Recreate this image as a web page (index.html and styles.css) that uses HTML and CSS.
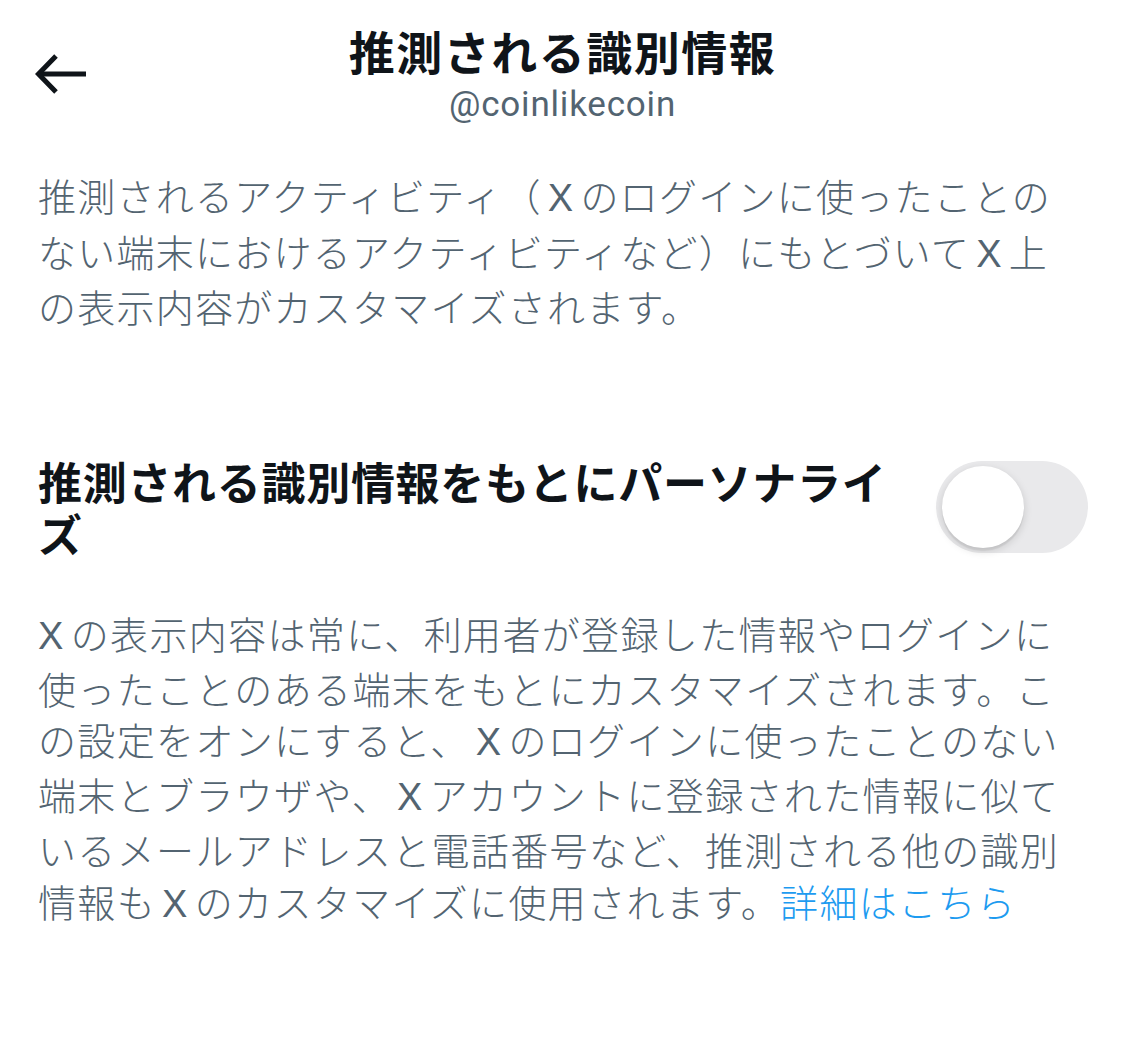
FILE: index.html
```html
<!DOCTYPE html>
<html lang="ja">
<head>
<meta charset="utf-8">
<link rel="stylesheet" href="styles.css">
</head>
<body>
<div class="page">
  <header class="header">
    <div class="back">
      <svg class="back-icon" viewBox="0 0 54 42" width="54" height="42">
        <path d="M52 21 H5" fill="none" stroke="#0f1419" stroke-width="5"/>
        <path d="M22 3 L4.5 21 L22 39" fill="none" stroke="#0f1419" stroke-width="5"/>
      </svg>
    </div>
    <div class="titles">
      <h1 class="title">推測される識別情報</h1>
      <div class="handle">@coinlikecoin</div>
    </div>
    <div class="spacer"></div>
  </header>

  <p class="desc">
    <span class="ln">推測されるアクティビティ（<span class="x">X</span>のログインに使ったことの</span>
    <span class="ln">ない端末におけるアクティビティなど）にもとづいて<span class="x">X</span>上</span>
    <span class="ln">の表示内容がカスタマイズされます。</span>
  </p>

  <div class="setting">
    <h2 class="setting-title">
      <span class="ln">推測される識別情報をもとにパーソナライ</span>
      <span class="ln">ズ</span>
    </h2>
    <div class="toggle"><div class="knob"></div></div>
  </div>

  <p class="desc desc2">
    <span class="ln"><span class="x x0">X</span>の表示内容は常に、利用者が登録した情報やログインに</span>
    <span class="ln">使ったことのある端末をもとにカスタマイズされます。こ</span>
    <span class="ln">の設定をオンにすると、<span class="x">X</span>のログインに使ったことのない</span>
    <span class="ln">端末とブラウザや、<span class="x">X</span>アカウントに登録された情報に似て</span>
    <span class="ln">いるメールアドレスと電話番号など、推測される他の識別</span>
    <span class="ln">情報も<span class="x">X</span>のカスタマイズに使用されます。<a class="link" href="#">詳細はこちら</a></span>
  </p>
</div>
</body>
</html>
```

FILE: styles.css
```css
html, body {
  margin: 0;
  padding: 0;
  background: #ffffff;
}
body {
  font-family: "Noto Sans CJK JP", "Noto Sans", sans-serif;
  color: #0f1419;
}
.page {
  width: 1125px;
  height: 1037px;
  overflow: hidden;
}
.header {
  display: grid;
  grid-template-columns: 1fr auto 1fr;
  align-items: center;
  padding-top: 22px;
}
.back {
  padding-left: 34px;
  display: flex;
  align-items: center;
}
.back-icon {
  display: block;
}
.titles {
  display: flex;
  flex-direction: column;
  align-items: center;
}
.title {
  margin: 0;
  font-size: 46px;
  line-height: 56px;
  font-weight: 700;
  letter-spacing: 1.5px;
  color: #0f1419;
}
.handle {
  margin-top: 6px;
  font-family: Roboto, "Liberation Sans", sans-serif;
  font-size: 35px;
  line-height: 42px;
  letter-spacing: 0.8px;
  color: #536471;
}
.desc {
  margin: 43px 0 0 0;
  padding: 0 38px;
  font-size: 38px;
  line-height: 52.5px;
  letter-spacing: 1.25px;
  font-weight: 300;
  color: #536471;
}
.ln {
  display: block;
  white-space: nowrap;
}
.x {
  font-family: "Liberation Sans", sans-serif;
  padding: 0 6px 0 6px;
}
.x0 {
  padding-left: 0;
}
.setting {
  margin-top: 122px;
  display: flex;
  align-items: center;
  justify-content: space-between;
  padding: 0 37px 0 38px;
}
.setting-title {
  margin: 0;
  font-size: 44px;
  line-height: 52px;
  font-weight: 700;
  letter-spacing: 0.7px;
  color: #0f1419;
}
.toggle {
  width: 152px;
  height: 92px;
  border-radius: 46px;
  background: #e9e9eb;
  display: flex;
  align-items: center;
  padding: 0 6px;
  box-sizing: border-box;
  flex-shrink: 0;
}
.knob {
  width: 82px;
  height: 82px;
  border-radius: 50%;
  background: #ffffff;
  box-shadow: 0 3px 8px rgba(0,0,0,0.15), 0 3px 1px rgba(0,0,0,0.06);
}
.desc2 {
  margin-top: 48px;
  line-height: 51.2px;
  letter-spacing: 1.35px;
}
.link {
  color: #1d9bf0;
  text-decoration: none;
}
```
